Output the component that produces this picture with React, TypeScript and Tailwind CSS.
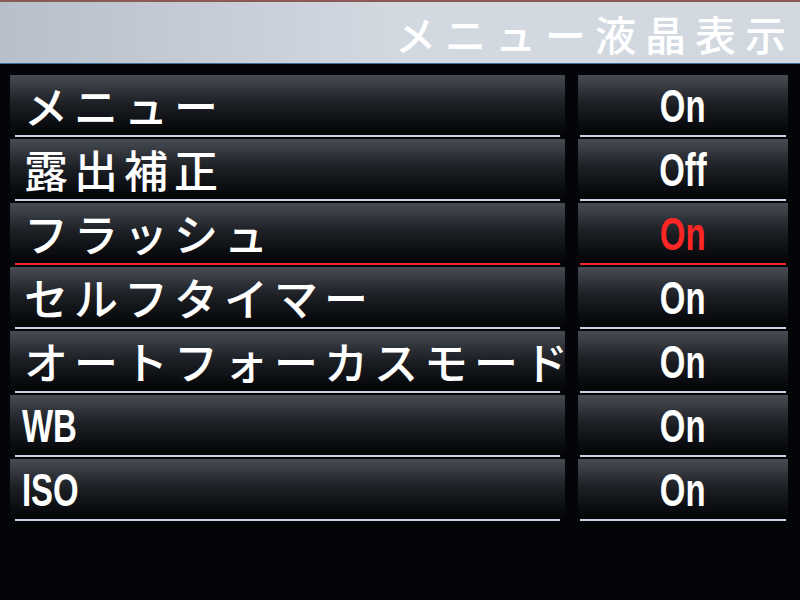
import React from 'react';

type Item = { label: string; value: string; latin?: boolean; active?: boolean };

const ITEMS: Item[] = [
  { label: 'メニュー', value: 'On' },
  { label: '露出補正', value: 'Off' },
  { label: 'フラッシュ', value: 'On', active: true },
  { label: 'セルフタイマー', value: 'On' },
  { label: 'オートフォーカスモード', value: 'On' },
  { label: 'WB', value: 'On', latin: true },
  { label: 'ISO', value: 'On', latin: true },
];

const jp = { fontFamily: '"Noto Sans CJK JP", "Noto Sans", sans-serif' };
const latin = { fontFamily: '"Liberation Sans", Arial, sans-serif' };

function Cell({ children, active, lineClass }: { children: React.ReactNode; active?: boolean; lineClass: string }) {
  return (
    <div className="flex flex-col">
      <div className="h-[60px] bg-gradient-to-b from-[#474c54] via-[#1b1e23] to-[#040507] flex items-center">
        {children}
      </div>
      <div className={`h-[2px] ${lineClass} ${active ? 'bg-[#f0262a]' : 'bg-[#c9d5e6]'}`} />
    </div>
  );
}

export default function App() {
  return (
    <div className="w-[800px] h-[600px] bg-[#040508] overflow-hidden relative">
      <div className="h-[2px] bg-[#8c5a52]" />
      <div className="h-[61px] bg-gradient-to-r from-[#b7bfca] via-[#d3d9e1] to-[#d2d8e0] flex items-center justify-end pr-[5px]">
        <span className="text-white text-[41px] font-medium tracking-[9px] leading-[48px]" style={jp}>
          メニュー液晶表示
        </span>
      </div>
      <div className="h-[1px] bg-[#3c6d9c]" />

      <div className="grid grid-cols-[555px_210px] gap-x-[13px] gap-y-[2px] pl-[10px] pt-[11px]">
        {ITEMS.map((it) => (
          <React.Fragment key={it.label}>
            <Cell active={it.active} lineClass="mx-[5px]">
              {it.latin ? (
                <span
                  className="inline-block text-white text-[47px] font-bold leading-[52px] origin-left scale-x-[0.7] pl-[17px] pt-[2px]"
                  style={latin}
                >
                  {it.label}
                </span>
              ) : (
                <span className="text-white text-[44px] font-medium tracking-[6px] leading-[52px] pl-[14px] whitespace-nowrap" style={jp}>
                  {it.label}
                </span>
              )}
            </Cell>
            <Cell active={it.active} lineClass="mx-[2px]">
              <div className="w-full flex justify-center">
                <span
                  className={`inline-block text-[47px] font-bold leading-[52px] scale-x-[0.7] pt-[2px] ${it.active ? 'text-[#ff2626]' : 'text-white'}`}
                  style={latin}
                >
                  {it.value}
                </span>
              </div>
            </Cell>
          </React.Fragment>
        ))}
      </div>
    </div>
  );
}
